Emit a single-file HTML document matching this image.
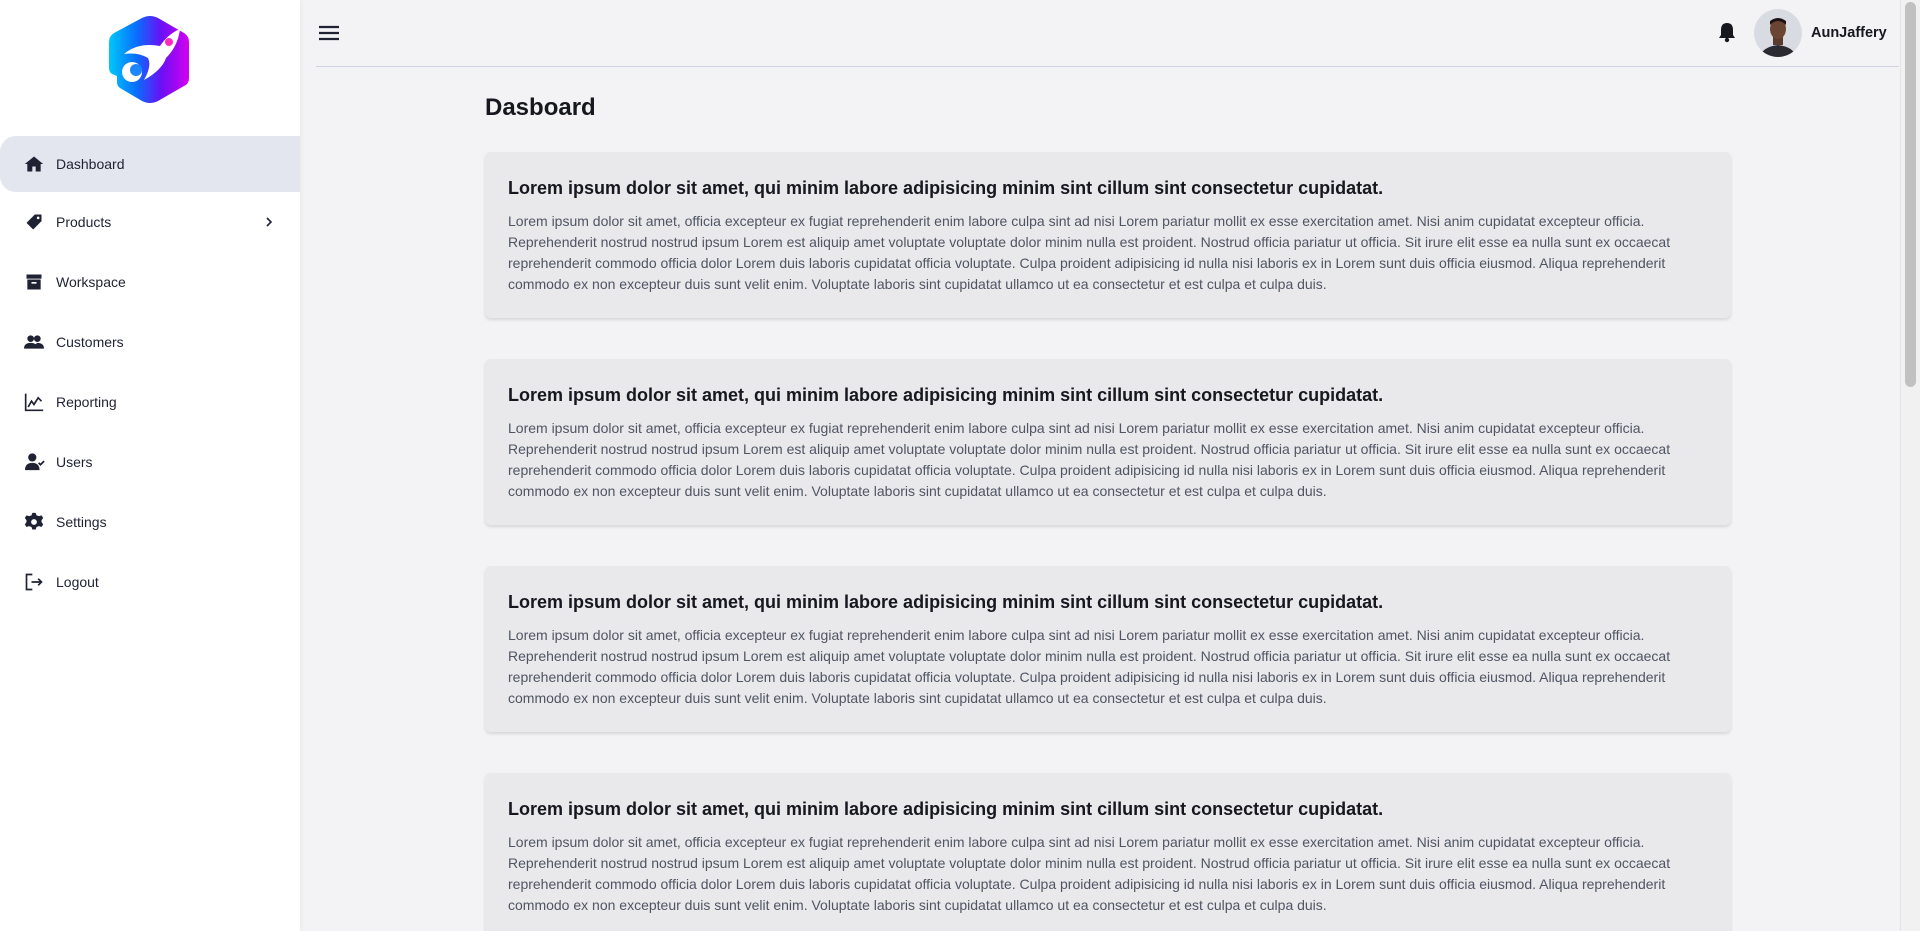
<!DOCTYPE html>
<html><head><meta charset="utf-8"><style>
*{box-sizing:border-box;margin:0;padding:0}
html,body{overflow:hidden}
body{width:1920px;height:931px;background:#f3f3f5;font-family:"Liberation Sans",sans-serif;position:relative}
.side{position:absolute;left:0;top:0;width:300px;height:931px;background:#fff;box-shadow:1px 0 4px rgba(0,0,0,.05)}
.logo{position:absolute;left:108px;top:14px}
.item{position:absolute;left:0;width:300px;height:56px;display:flex;align-items:center;font-size:14px;color:#1f2233}
.item.active{background:#e3e6ee;border-radius:16px 0 0 16px}
.item svg{position:absolute;left:24px}
.item span{position:absolute;left:56px}
.hdr{position:absolute;left:316px;right:21px;top:66px;border-top:1px solid #cfd3e3}
.scroll{position:absolute;right:0;top:0;width:20px;height:931px;background:#f1f1f1;border-left:1px solid #e4e4e4}
.scroll div{position:absolute;left:4px;top:2px;width:11px;height:385px;background:#c1c1c1;border-radius:6px}
h1{position:absolute;left:485px;top:94px;font-size:24px;font-weight:bold;color:#16171f}
.card{position:absolute;left:485px;width:1246px;height:166px;background:#e9e8eb;border-radius:6px;box-shadow:0 2px 3px rgba(0,0,0,.12);padding:26px 23px}
.card h2{font-size:18px;font-weight:bold;color:#16171f;margin-bottom:12px;white-space:nowrap}
.card p{font-size:14px;line-height:21px;color:#4f5563;white-space:nowrap}
</style></head><body>
<div class="side">
<svg class="logo" width="84" height="92" viewBox="0 0 84 92"><defs><linearGradient id="g" x1="0" x2="1" y1="0" y2="0"><stop offset="0" stop-color="#00c8f8"/><stop offset=".35" stop-color="#0a6cff"/><stop offset=".65" stop-color="#6a10f5"/><stop offset="1" stop-color="#d400f0"/></linearGradient></defs>
<path d="M42 2 Q46 2 50 4 L76 19 Q81 22 81 28 L81 64 Q81 70 76 72 L50 87 Q42 91 34 87 L12 74 Q9 72 9 68 L9 62 L4 60 Q1 58 1 54 L1 28 Q1 22 6 19 L34 4 Q38 2 42 2Z" fill="url(#g)"/>
<path d="M16 40 Q30 28 52 32 Q60 20 72 15 Q70 32 58 44 Q54 56 36 66 Q44 52 40 44 Q30 38 16 40Z" fill="#fff"/>
<circle cx="24" cy="58" r="10" fill="#fff"/><circle cx="28" cy="56" r="6" fill="#1d86ff"/>
<circle cx="61" cy="28" r="4" fill="#ff2bbd"/></svg>
<div class="item active" style="top:136px"><svg width="20" height="20" viewBox="0 0 24 24"><path d="M12 3L1 12h3v9h6v-6h4v6h6v-9h3z" fill="#1f2233"/></svg><span>Dashboard</span></div>
<div class="item" style="top:194px"><svg width="20" height="20" viewBox="0 0 24 24"><path d="M13 3h8v8L11 21 3 13z" fill="#1f2233"/><circle cx="17" cy="7" r="1.6" fill="#fff"/></svg><span>Products</span><svg style="left:262px" width="14" height="14" viewBox="0 0 14 14"><path d="M5 3l4 4-4 4" stroke="#1f2233" stroke-width="1.6" fill="none"/></svg></div>
<div class="item" style="top:254px"><svg width="20" height="20" viewBox="0 0 24 24"><rect x="3" y="3" width="18" height="5" fill="#1f2233"/><rect x="4" y="9" width="16" height="12" fill="#1f2233"/><rect x="9" y="12" width="6" height="2" fill="#fff"/></svg><span>Workspace</span></div>
<div class="item" style="top:314px"><svg width="20" height="20" viewBox="0 0 24 24"><circle cx="8" cy="8" r="4" fill="#1f2233"/><circle cx="16" cy="8" r="4" fill="#1f2233"/><path d="M0 20q0-7 8-7t8 7zM12 20q0-5 4-7 8 0 8 7z" fill="#1f2233"/></svg><span>Customers</span></div>
<div class="item" style="top:374px"><svg width="20" height="20" viewBox="0 0 24 24"><path d="M2 2v20h21M5 18l4-7 3 4 5-8 4 4" stroke="#1f2233" stroke-width="2" fill="none"/></svg><span>Reporting</span></div>
<div class="item" style="top:434px"><svg width="22" height="20" viewBox="0 0 24 22"><circle cx="9" cy="6" r="4.5" fill="#1f2233"/><path d="M1 20q0-8 8-8t8 8z" fill="#1f2233"/><path d="M16 12l2 2 4-4" stroke="#1f2233" stroke-width="2" fill="none"/></svg><span>Users</span></div>
<div class="item" style="top:494px"><svg width="20" height="20" viewBox="0 0 24 24"><path d="M10 1h4l1 3 3 1 3-1 2 3-2 3v2l2 3-2 3-3-1-3 1-1 3h-4l-1-3-3-1-3 1-2-3 2-3v-2L1 7l2-3 3 1 3-1z" fill="#1f2233"/><circle cx="12" cy="12" r="3.5" fill="#fff"/></svg><span>Settings</span></div>
<div class="item" style="top:554px"><svg width="20" height="20" viewBox="0 0 24 24"><path d="M10 3H3v18h7M9 12h12M17 8l4 4-4 4" stroke="#1f2233" stroke-width="2" fill="none"/></svg><span>Logout</span></div>
</div>
<svg style="position:absolute;left:318px;top:24px" width="22" height="18" viewBox="0 0 22 18"><path d="M1 3h20M1 9h20M1 15h20" stroke="#1f2233" stroke-width="2.2"/></svg>
<svg style="position:absolute;left:1718px;top:22px" width="18" height="21" viewBox="0 0 18 21"><path d="M9 1q-6 0-6 7v5l-2 3h16l-2-3V8q0-7-6-7z" fill="#16171f"/><circle cx="9" cy="18" r="2.2" fill="#16171f"/></svg>
<svg style="position:absolute;left:1754px;top:9px" width="48" height="48" viewBox="0 0 48 48"><defs><clipPath id="c"><circle cx="24" cy="24" r="24"/></clipPath></defs><circle cx="24" cy="24" r="24" fill="#d9dbe3"/><g clip-path="url(#c)"><path d="M6 48q2-10 18-12 16 2 18 12z" fill="#2a2a30"/><rect x="19" y="26" width="10" height="10" fill="#5a3a2c"/><ellipse cx="24" cy="20" rx="8" ry="10" fill="#6b4534"/><path d="M16 16q8-8 16 0v-4q-8-6-16 0z" fill="#1b1414"/></g></svg>
<div style="position:absolute;left:1811px;top:25px;font-size:14.5px;font-weight:bold;color:#16171f">AunJaffery</div>
<div class="hdr"></div>
<h1>Dasboard</h1>
<div class="card" style="top:152px"><h2>Lorem ipsum dolor sit amet, qui minim labore adipisicing minim sint cillum sint consectetur cupidatat.</h2><p>Lorem ipsum dolor sit amet, officia excepteur ex fugiat reprehenderit enim labore culpa sint ad nisi Lorem pariatur mollit ex esse exercitation amet. Nisi anim cupidatat excepteur officia.<br>Reprehenderit nostrud nostrud ipsum Lorem est aliquip amet voluptate voluptate dolor minim nulla est proident. Nostrud officia pariatur ut officia. Sit irure elit esse ea nulla sunt ex occaecat<br>reprehenderit commodo officia dolor Lorem duis laboris cupidatat officia voluptate. Culpa proident adipisicing id nulla nisi laboris ex in Lorem sunt duis officia eiusmod. Aliqua reprehenderit<br>commodo ex non excepteur duis sunt velit enim. Voluptate laboris sint cupidatat ullamco ut ea consectetur et est culpa et culpa duis.</p></div>
<div class="card" style="top:359px"><h2>Lorem ipsum dolor sit amet, qui minim labore adipisicing minim sint cillum sint consectetur cupidatat.</h2><p>Lorem ipsum dolor sit amet, officia excepteur ex fugiat reprehenderit enim labore culpa sint ad nisi Lorem pariatur mollit ex esse exercitation amet. Nisi anim cupidatat excepteur officia.<br>Reprehenderit nostrud nostrud ipsum Lorem est aliquip amet voluptate voluptate dolor minim nulla est proident. Nostrud officia pariatur ut officia. Sit irure elit esse ea nulla sunt ex occaecat<br>reprehenderit commodo officia dolor Lorem duis laboris cupidatat officia voluptate. Culpa proident adipisicing id nulla nisi laboris ex in Lorem sunt duis officia eiusmod. Aliqua reprehenderit<br>commodo ex non excepteur duis sunt velit enim. Voluptate laboris sint cupidatat ullamco ut ea consectetur et est culpa et culpa duis.</p></div>
<div class="card" style="top:566px"><h2>Lorem ipsum dolor sit amet, qui minim labore adipisicing minim sint cillum sint consectetur cupidatat.</h2><p>Lorem ipsum dolor sit amet, officia excepteur ex fugiat reprehenderit enim labore culpa sint ad nisi Lorem pariatur mollit ex esse exercitation amet. Nisi anim cupidatat excepteur officia.<br>Reprehenderit nostrud nostrud ipsum Lorem est aliquip amet voluptate voluptate dolor minim nulla est proident. Nostrud officia pariatur ut officia. Sit irure elit esse ea nulla sunt ex occaecat<br>reprehenderit commodo officia dolor Lorem duis laboris cupidatat officia voluptate. Culpa proident adipisicing id nulla nisi laboris ex in Lorem sunt duis officia eiusmod. Aliqua reprehenderit<br>commodo ex non excepteur duis sunt velit enim. Voluptate laboris sint cupidatat ullamco ut ea consectetur et est culpa et culpa duis.</p></div>
<div class="card" style="top:773px"><h2>Lorem ipsum dolor sit amet, qui minim labore adipisicing minim sint cillum sint consectetur cupidatat.</h2><p>Lorem ipsum dolor sit amet, officia excepteur ex fugiat reprehenderit enim labore culpa sint ad nisi Lorem pariatur mollit ex esse exercitation amet. Nisi anim cupidatat excepteur officia.<br>Reprehenderit nostrud nostrud ipsum Lorem est aliquip amet voluptate voluptate dolor minim nulla est proident. Nostrud officia pariatur ut officia. Sit irure elit esse ea nulla sunt ex occaecat<br>reprehenderit commodo officia dolor Lorem duis laboris cupidatat officia voluptate. Culpa proident adipisicing id nulla nisi laboris ex in Lorem sunt duis officia eiusmod. Aliqua reprehenderit<br>commodo ex non excepteur duis sunt velit enim. Voluptate laboris sint cupidatat ullamco ut ea consectetur et est culpa et culpa duis.</p></div>
<div class="scroll"><div></div></div>
</body></html>
